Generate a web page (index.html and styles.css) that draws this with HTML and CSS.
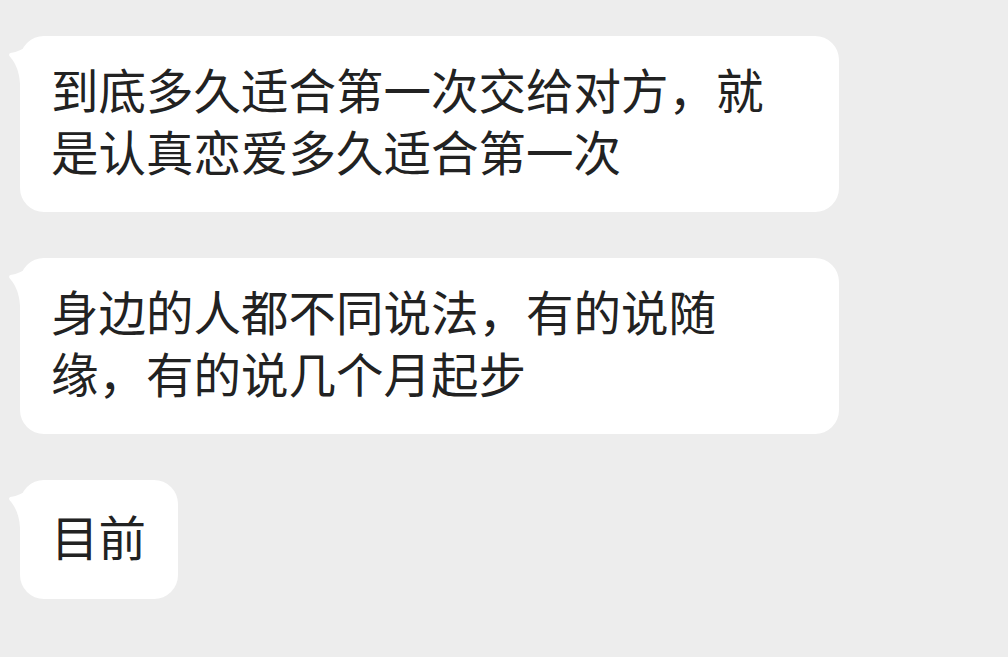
FILE: index.html
```html
<!DOCTYPE html>
<html lang="zh-CN">
<head>
<meta charset="utf-8">
<link rel="stylesheet" href="styles.css">
</head>
<body>
<div class="chat">
  <div class="msg">
    <svg class="tail" viewBox="0 0 24 60" width="24" height="60"><path d="M2.5,15 C9,14 15,11.5 21,7 L24,7 L24,60 L12,60 L12,46 C11.5,32 6,23 1.8,18.5 C0.6,17.2 1,15.3 2.5,15 Z"/></svg>
    <div class="text">到底多久适合第一次交给对方，就是认真恋爱多久适合第一次</div>
  </div>
  <div class="msg">
    <svg class="tail" viewBox="0 0 24 60" width="24" height="60"><path d="M2.5,15 C9,14 15,11.5 21,7 L24,7 L24,60 L12,60 L12,46 C11.5,32 6,23 1.8,18.5 C0.6,17.2 1,15.3 2.5,15 Z"/></svg>
    <div class="text">身边的人都不同说法，有的说随缘，有的说几个月起步</div>
  </div>
  <div class="msg">
    <svg class="tail" viewBox="0 0 24 60" width="24" height="60"><path d="M2.5,15 C9,14 15,11.5 21,7 L24,7 L24,60 L12,60 L12,46 C11.5,32 6,23 1.8,18.5 C0.6,17.2 1,15.3 2.5,15 Z"/></svg>
    <div class="text">目前</div>
  </div>
</div>
</body>
</html>
```

FILE: styles.css
```css
html, body {
  margin: 0;
  padding: 0;
  background: #ededed;
}

body {
  width: 1008px;
  height: 657px;
  overflow: hidden;
  font-family: "Noto Sans CJK SC", "Noto Sans", sans-serif;
}

.chat {
  display: flex;
  flex-direction: column;
  align-items: flex-start;
  gap: 46px;
  padding: 36px 0 0 20px;
}

.msg {
  position: relative;
  box-sizing: border-box;
  max-width: 819px;
  min-height: 119px;
  display: flex;
  align-items: center;
  padding: 22px 32px 30px 31px;
  background: #ffffff;
  border-radius: 24px;
}

.tail {
  position: absolute;
  left: -12px;
  top: 2px;
  fill: #ffffff;
}

.text {
  position: relative;
  font-size: 47.5px;
  line-height: 62px;
  color: #222222;
  line-break: strict;
}
```
